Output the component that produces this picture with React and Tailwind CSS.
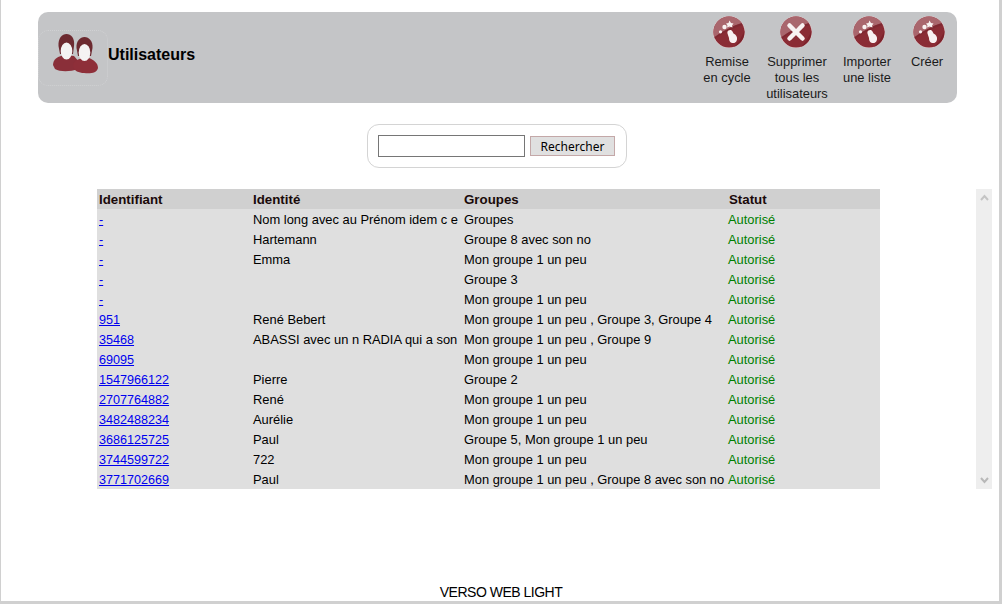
const rows = [
  ["-", "Nom long avec au Prénom idem c e", "Groupes"],
  ["-", "Hartemann", "Groupe 8 avec son no"],
  ["-", "Emma", "Mon groupe 1 un peu"],
  ["-", "", "Groupe 3"],
  ["-", "", "Mon groupe 1 un peu"],
  ["951", "René Bebert", "Mon groupe 1 un peu , Groupe 3, Groupe 4"],
  ["35468", "ABASSI avec un n RADIA qui a son", "Mon groupe 1 un peu , Groupe 9"],
  ["69095", "", "Mon groupe 1 un peu"],
  ["1547966122", "Pierre", "Groupe 2"],
  ["2707764882", "René", "Mon groupe 1 un peu"],
  ["3482488234", "Aurélie", "Mon groupe 1 un peu"],
  ["3686125725", "Paul", "Groupe 5, Mon groupe 1 un peu"],
  ["3744599722", "722", "Mon groupe 1 un peu"],
  ["3771702669", "Paul", "Mon groupe 1 un peu , Groupe 8 avec son no"],
];

function RoundIcon({ cross, className }) {
  const id = cross ? "cc" : "cw";
  return (
    <svg width="34" height="34" viewBox="0 0 34 34" className={`block ${className}`}>
      <defs>
        <clipPath id={id}><circle cx="17" cy="17" r="15.5" /></clipPath>
      </defs>
      <circle cx="17" cy="17" r="16" fill="#e3cfd1" />
      <circle cx="17" cy="17" r="15.5" fill="#8a2c35" />
      <g clipPath={`url(#${id})`}>
        <path d="M0 0H34V7 C26 9 21 11 16 14 C10 17 5 20 0 24Z" fill="#a9666d" />
        <path d="M0 26 C5 22 10 19 16 16 C22 13 27 11 34 9 V7 C26 9 21 11 16 14 C10 17 5 20 0 24Z" fill="#7a2630" opacity="0.7" />
        <path d="M20 34 C27 28 31 20 34 12 V34Z" fill="#7d232c" />
      </g>
      {cross ? (
        <path d="M10.5 10.5 L23.5 23.5 M23.5 10.5 L10.5 23.5" stroke="#f8f1f1" strokeWidth="4.5" strokeLinecap="round" />
      ) : (
        <g fill="#f8f1f1">
          <path d="M16.5 15.5 C18 14.5 20 15 20.5 16.5 L21.5 18.5 C24 19.5 25.5 22 25 24.5 C24.5 27.5 22 28.5 20 28 C17.5 27.5 17 25 17 23 L15.5 18.5 C15.2 17 15.5 16 16.5 15.5Z" />
          <circle cx="8.5" cy="16.8" r="1.6" />
          <circle cx="12.5" cy="12" r="2.2" />
          <path d="M17.5 5.5 L19 8 L21.5 8.5 L20 10.5 L20.5 12.5 L17.5 11.5 L15 12.5 L15.5 10.5 L14 8.5 L16.5 8Z" />
        </g>
      )}
    </svg>
  );
}

function UsersIcon() {
  return (
    <div className="h-[56px] w-[70px] shrink-0 rounded-[10px] border border-dotted border-[#d0d1d3]">
      <svg width="68" height="54" viewBox="1 1 68 54" className="block">
        <path d="M15 35 C15 29 20 26 27 25 L36 26 L42 33 L40 39 C32 42 22 42 17 39Z" fill="#8a2f39" />
        <path d="M20.5 16 C20 8 24 4 28.5 4 C33 4 37 8 36 16 L35 24 H22Z" fill="#6d2a30" />
        <ellipse cx="28.5" cy="21" rx="5.8" ry="8.6" fill="#f5f3f3" />
        <path d="M35 36 C35 31 40 29 45 28 L51 28 C56 30 60 33 60 38 C59 43 52 44 46 43 C41 43 36 41 35 36Z" fill="#8e2f39" />
        <path d="M38.5 18 C38 11 42 7 46.5 7 C51 7 55 11 54.5 18 L53 26 H40Z" fill="#6d2a30" />
        <ellipse cx="46.5" cy="22.5" rx="5.8" ry="8.6" fill="#f5f3f3" />
      </svg>
    </div>
  );
}

function Action({ children, cross, w, icon }) {
  return (
    <div className={`flex flex-col items-center text-center ${w}`}>
      <RoundIcon cross={cross} className={icon} />
      <div className="mt-[5px] leading-[16px]">{children}</div>
    </div>
  );
}

export default function App() {
  return (
    <div className="relative h-[604px] w-[1002px] overflow-hidden border-r-[3px] border-b-[3px] border-l-[1px] border-[#d0d0d0] bg-white font-['Liberation_Sans',Arial,sans-serif] text-[12.9px] text-black">
      <header className="ml-[37px] mt-[12px] flex h-[91px] w-[919px] items-start rounded-[10px] bg-[#c4c5c7]">
        <div className="mt-[18px] flex items-center">
          <UsersIcon />
          <h1 className="mt-[-6px] text-[16px] font-bold">Utilisateurs</h1>
        </div>
        <div className="ml-auto mt-[3px] flex text-[#1a1a1a]">
          <Action w="w-[70px]" icon="ml-[3px]">Remise<br />en cycle</Action>
          <Action w="w-[70px]" icon="mr-[3px]" cross>Supprimer<br />tous les<br />utilisateurs</Action>
          <Action w="w-[70px]" icon="ml-[3px]">Importer<br />une liste</Action>
          <Action w="w-[50px]" icon="ml-[3px]">Créer</Action>
          <div className="w-[5px]" />
        </div>
      </header>

      <div className="ml-[366px] mt-[21px] flex h-[44px] w-[260px] items-center rounded-[12px] border border-[#d4d4d4] pl-[10px]">
        <input className="h-[22px] w-[147px] border border-[#767676] bg-white" />
        <button className="ml-[5px] h-[20px] w-[85px] border border-[#c4a8a8] bg-[#e0e0e0] pt-[2px] font-['Noto_Sans',sans-serif] text-[12px] leading-none">Rechercher</button>
      </div>

      <div className="relative ml-[96px] mt-[21px] h-[300px] w-[895px]">
        <table className="w-[783px] table-fixed border-collapse bg-[#dfdfdf]">
          <colgroup>
            <col className="w-[155px]" />
            <col className="w-[211px]" />
            <col className="w-[265px]" />
            <col />
          </colgroup>
          <thead>
            <tr className="h-[20px] bg-[#d0d0d0] text-left text-[13.3px] text-[#1a0a0a]">
              <th className="pl-[2px] pt-[2px] font-bold leading-[18px]">Identifiant</th>
              <th className="pl-[1px] pt-[2px] font-bold leading-[18px]">Identité</th>
              <th className="pl-[1px] pt-[2px] font-bold leading-[18px]">Groupes</th>
              <th className="pl-[1px] pt-[2px] font-bold leading-[18px]">Statut</th>
            </tr>
          </thead>
          <tbody>
            {rows.map((r, i) => (
              <tr key={i} className="h-[20px]">
                <td className="pl-[2px] pt-[2px] text-[12.6px] leading-[18px]"><a href="#" className="text-[#0000ee] underline">{r[0]}</a></td>
                <td className="overflow-hidden whitespace-nowrap pl-[1px] pt-[2px] leading-[18px]">{r[1]}</td>
                <td className="overflow-hidden whitespace-nowrap pl-[1px] pt-[2px] leading-[18px]">{r[2]}</td>
                <td className="pt-[2px] leading-[18px] text-[#008000]">Autorisé</td>
              </tr>
            ))}
          </tbody>
        </table>
        <div className="absolute right-0 top-0 flex h-[300px] w-[16px] flex-col items-center justify-between bg-[#eeeeee] py-[5px]">
          <svg width="9" height="7" viewBox="0 0 9 7"><path d="M1 6 L4.5 2 L8 6" fill="none" stroke="#c4c4c4" strokeWidth="2" /></svg>
          <svg width="9" height="7" viewBox="0 0 9 7"><path d="M1 1 L4.5 5 L8 1" fill="none" stroke="#b8b8b8" strokeWidth="2" /></svg>
        </div>
      </div>

      <footer className="absolute bottom-[1px] left-0 w-full pl-[2px] text-center leading-[14px]">
        <span className="text-[14px] tracking-[-0.5px]">VERSO WEB LIGHT</span>
      </footer>
    </div>
  );
}
